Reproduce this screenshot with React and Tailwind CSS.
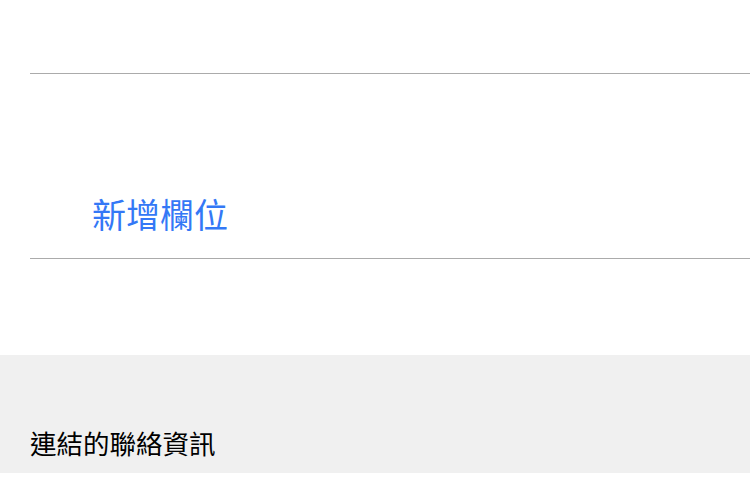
import React from "react";

const App = () => {
  return (
    <div
      className="w-[750px] h-[480px] overflow-hidden bg-white"
      style={{ fontFamily: '"Noto Sans CJK TC", "Noto Sans", sans-serif' }}
    >
      {/* cut-off row above */}
      <div className="h-[73px] relative overflow-hidden">
        <div className="absolute left-[93px] -top-[36px] text-[34px] leading-[34px] text-[#d8d8d8]">
          名稱
        </div>
      </div>
      <div className="ml-[30px] h-px bg-[#ababab]" />

      {/* add field row */}
      <div className="h-[184px] flex items-end pl-[92px] pb-[24px]">
        <span className="text-[34px] leading-[40px] text-[#3478f6]">新增欄位</span>
      </div>
      <div className="ml-[30px] h-px bg-[#ababab]" />

      <div className="h-[96px]" />

      {/* section header */}
      <div className="h-[118px] bg-[#f0f0f0] flex items-end pl-[30px] pb-[14px]">
        <span className="text-[26.5px] leading-[32px] text-black">連結的聯絡資訊</span>
      </div>
    </div>
  );
};

export default App;
